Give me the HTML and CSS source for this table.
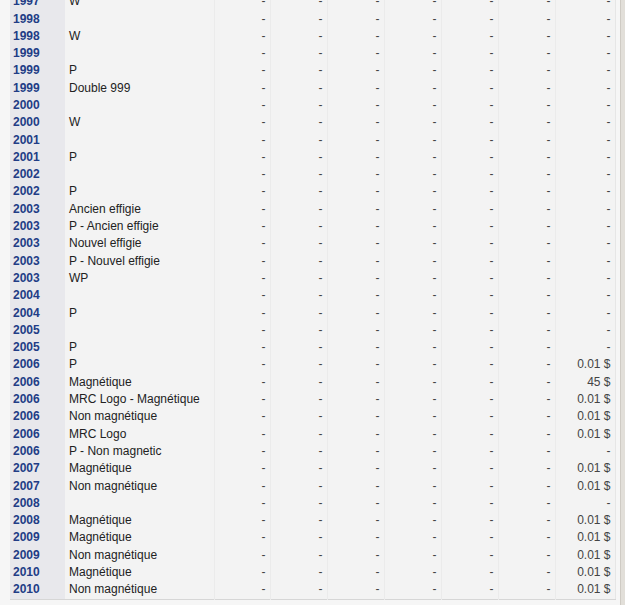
FILE: index.html
```html
<!DOCTYPE html>
<html lang="fr">
<head>
<meta charset="utf-8">
<title>Valeurs</title>
<link rel="stylesheet" href="styles.css">
</head>
<body>
<div class="page">
  <div class="panel">
    <table class="coins">
      <colgroup>
        <col class="c-year"><col class="c-desc">
        <col class="c-n1"><col class="c-n"><col class="c-n"><col class="c-n"><col class="c-n"><col class="c-n"><col class="c-last">
      </colgroup>
      <tbody>
        <tr><td class="yr">1997</td><td class="ds">W</td><td>-</td><td>-</td><td>-</td><td>-</td><td>-</td><td>-</td><td>-</td></tr>
        <tr><td class="yr">1998</td><td class="ds"></td><td>-</td><td>-</td><td>-</td><td>-</td><td>-</td><td>-</td><td>-</td></tr>
        <tr><td class="yr">1998</td><td class="ds">W</td><td>-</td><td>-</td><td>-</td><td>-</td><td>-</td><td>-</td><td>-</td></tr>
        <tr><td class="yr">1999</td><td class="ds"></td><td>-</td><td>-</td><td>-</td><td>-</td><td>-</td><td>-</td><td>-</td></tr>
        <tr><td class="yr">1999</td><td class="ds">P</td><td>-</td><td>-</td><td>-</td><td>-</td><td>-</td><td>-</td><td>-</td></tr>
        <tr><td class="yr">1999</td><td class="ds">Double 999</td><td>-</td><td>-</td><td>-</td><td>-</td><td>-</td><td>-</td><td>-</td></tr>
        <tr><td class="yr">2000</td><td class="ds"></td><td>-</td><td>-</td><td>-</td><td>-</td><td>-</td><td>-</td><td>-</td></tr>
        <tr><td class="yr">2000</td><td class="ds">W</td><td>-</td><td>-</td><td>-</td><td>-</td><td>-</td><td>-</td><td>-</td></tr>
        <tr><td class="yr">2001</td><td class="ds"></td><td>-</td><td>-</td><td>-</td><td>-</td><td>-</td><td>-</td><td>-</td></tr>
        <tr><td class="yr">2001</td><td class="ds">P</td><td>-</td><td>-</td><td>-</td><td>-</td><td>-</td><td>-</td><td>-</td></tr>
        <tr><td class="yr">2002</td><td class="ds"></td><td>-</td><td>-</td><td>-</td><td>-</td><td>-</td><td>-</td><td>-</td></tr>
        <tr><td class="yr">2002</td><td class="ds">P</td><td>-</td><td>-</td><td>-</td><td>-</td><td>-</td><td>-</td><td>-</td></tr>
        <tr><td class="yr">2003</td><td class="ds">Ancien effigie</td><td>-</td><td>-</td><td>-</td><td>-</td><td>-</td><td>-</td><td>-</td></tr>
        <tr><td class="yr">2003</td><td class="ds">P - Ancien effigie</td><td>-</td><td>-</td><td>-</td><td>-</td><td>-</td><td>-</td><td>-</td></tr>
        <tr><td class="yr">2003</td><td class="ds">Nouvel effigie</td><td>-</td><td>-</td><td>-</td><td>-</td><td>-</td><td>-</td><td>-</td></tr>
        <tr><td class="yr">2003</td><td class="ds">P - Nouvel effigie</td><td>-</td><td>-</td><td>-</td><td>-</td><td>-</td><td>-</td><td>-</td></tr>
        <tr><td class="yr">2003</td><td class="ds">WP</td><td>-</td><td>-</td><td>-</td><td>-</td><td>-</td><td>-</td><td>-</td></tr>
        <tr><td class="yr">2004</td><td class="ds"></td><td>-</td><td>-</td><td>-</td><td>-</td><td>-</td><td>-</td><td>-</td></tr>
        <tr><td class="yr">2004</td><td class="ds">P</td><td>-</td><td>-</td><td>-</td><td>-</td><td>-</td><td>-</td><td>-</td></tr>
        <tr><td class="yr">2005</td><td class="ds"></td><td>-</td><td>-</td><td>-</td><td>-</td><td>-</td><td>-</td><td>-</td></tr>
        <tr><td class="yr">2005</td><td class="ds">P</td><td>-</td><td>-</td><td>-</td><td>-</td><td>-</td><td>-</td><td>-</td></tr>
        <tr><td class="yr">2006</td><td class="ds">P</td><td>-</td><td>-</td><td>-</td><td>-</td><td>-</td><td>-</td><td>0.01 $</td></tr>
        <tr><td class="yr">2006</td><td class="ds">Magnétique</td><td>-</td><td>-</td><td>-</td><td>-</td><td>-</td><td>-</td><td>45 $</td></tr>
        <tr><td class="yr">2006</td><td class="ds">MRC Logo - Magnétique</td><td>-</td><td>-</td><td>-</td><td>-</td><td>-</td><td>-</td><td>0.01 $</td></tr>
        <tr><td class="yr">2006</td><td class="ds">Non magnétique</td><td>-</td><td>-</td><td>-</td><td>-</td><td>-</td><td>-</td><td>0.01 $</td></tr>
        <tr><td class="yr">2006</td><td class="ds">MRC Logo</td><td>-</td><td>-</td><td>-</td><td>-</td><td>-</td><td>-</td><td>0.01 $</td></tr>
        <tr><td class="yr">2006</td><td class="ds">P - Non magnetic</td><td>-</td><td>-</td><td>-</td><td>-</td><td>-</td><td>-</td><td>-</td></tr>
        <tr><td class="yr">2007</td><td class="ds">Magnétique</td><td>-</td><td>-</td><td>-</td><td>-</td><td>-</td><td>-</td><td>0.01 $</td></tr>
        <tr><td class="yr">2007</td><td class="ds">Non magnétique</td><td>-</td><td>-</td><td>-</td><td>-</td><td>-</td><td>-</td><td>0.01 $</td></tr>
        <tr><td class="yr">2008</td><td class="ds"></td><td>-</td><td>-</td><td>-</td><td>-</td><td>-</td><td>-</td><td>-</td></tr>
        <tr><td class="yr">2008</td><td class="ds">Magnétique</td><td>-</td><td>-</td><td>-</td><td>-</td><td>-</td><td>-</td><td>0.01 $</td></tr>
        <tr><td class="yr">2009</td><td class="ds">Magnétique</td><td>-</td><td>-</td><td>-</td><td>-</td><td>-</td><td>-</td><td>0.01 $</td></tr>
        <tr><td class="yr">2009</td><td class="ds">Non magnétique</td><td>-</td><td>-</td><td>-</td><td>-</td><td>-</td><td>-</td><td>0.01 $</td></tr>
        <tr><td class="yr">2010</td><td class="ds">Magnétique</td><td>-</td><td>-</td><td>-</td><td>-</td><td>-</td><td>-</td><td>0.01 $</td></tr>
        <tr><td class="yr">2010</td><td class="ds">Non magnétique</td><td>-</td><td>-</td><td>-</td><td>-</td><td>-</td><td>-</td><td>0.01 $</td></tr>
      </tbody>
    </table>
  </div>
</div>
</body>
</html>
```

FILE: styles.css
```css
html, body {
  margin: 0;
  padding: 0;
  background: #e2dfd9;
  height: 100%;
  overflow: hidden;
}

.page {
  width: 620px;
  height: 100%;
  background: #f6f6f6;
  border-right: 1px solid #cfcbc4;
  overflow: hidden;
}

.panel {
  margin-top: -6.8px;
  padding-left: 10px;
  width: 605px;
}

.coins {
  width: 605px;
  table-layout: fixed;
  border-collapse: collapse;
  font-family: "Liberation Sans", Arial, Helvetica, sans-serif;
  font-size: 12px;
  background: #f3f3f3;
  border-bottom: 1px solid #d6d6d6;
  border-right: 1px solid #e6e6e6;
}

.c-year { width: 55px; }
.c-desc { width: 149px; }
.c-n1 { width: 56px; }
.c-n { width: 57px; }
.c-last { width: 60px; }

.coins td {
  height: 17.3px;
  line-height: 17.3px;
  padding: 0 4px 0 0;
  text-align: right;
  color: #444444;
  white-space: nowrap;
  overflow: hidden;
  border-left: 1px solid #ebebeb;
}

.coins td.yr {
  background: #e8e8ec;
  color: #223d86;
  font-weight: bold;
  text-align: left;
  padding-left: 3px;
  border-left: none;
}

.coins td.ds {
  text-align: left;
  padding-left: 4px;
  color: #222222;
  border-left: none;
}
```
